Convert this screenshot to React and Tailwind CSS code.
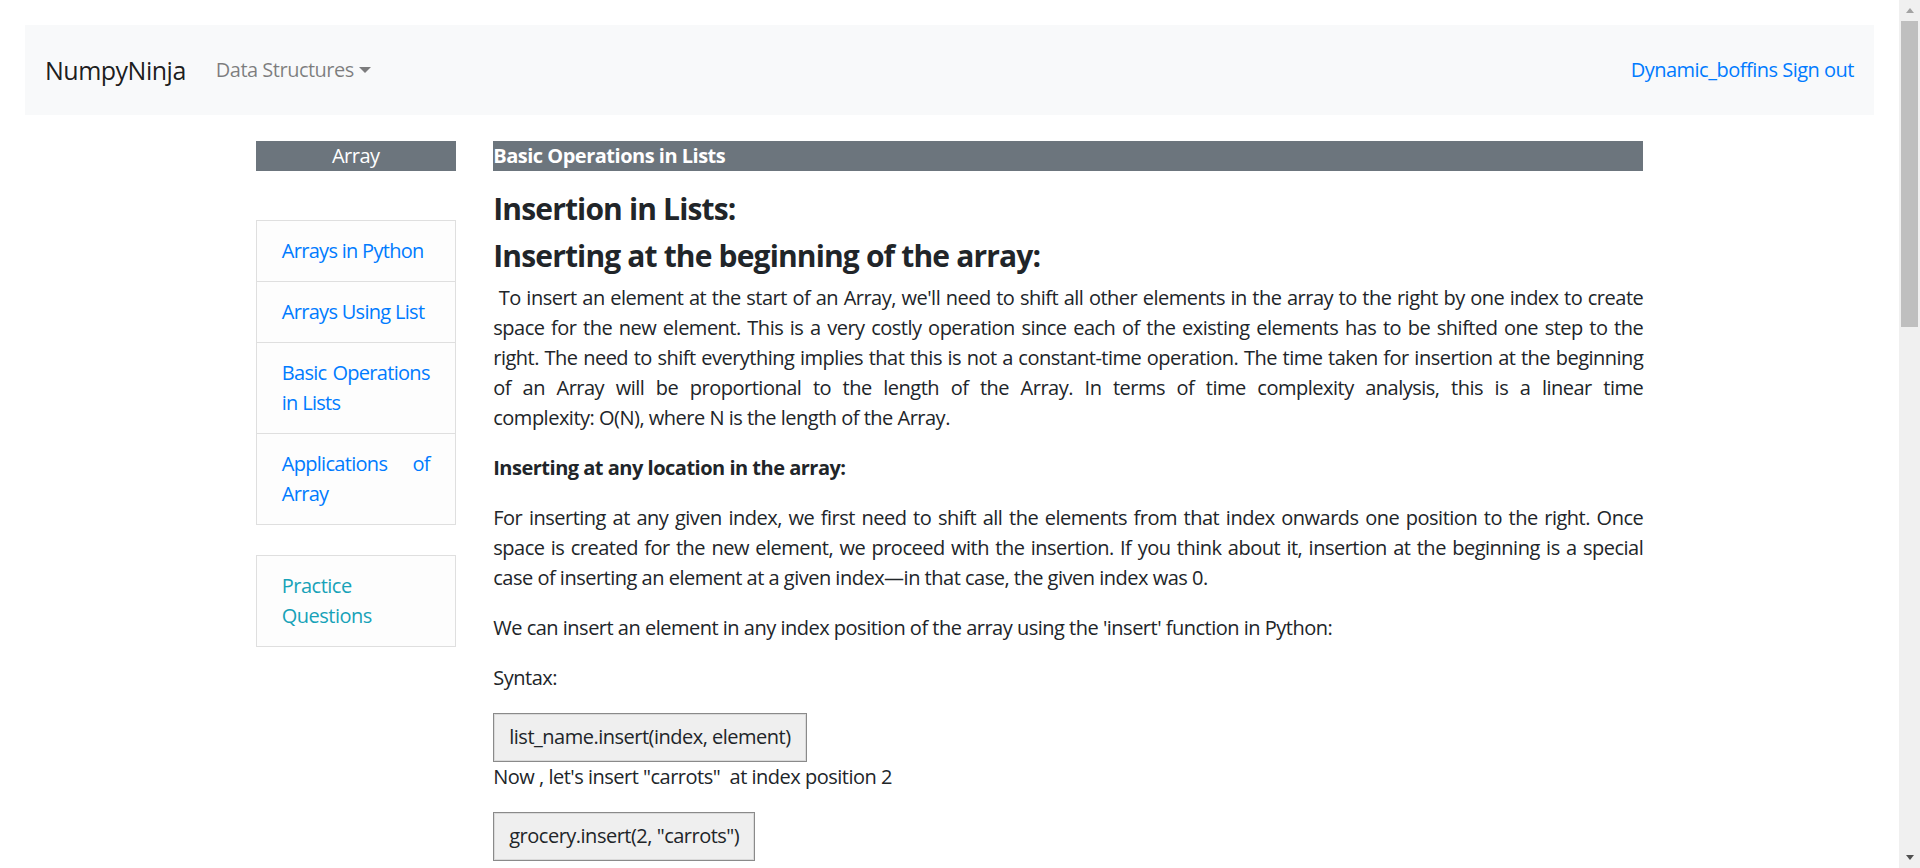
import React from "react";

const sideLinks = [
  "Arrays in Python",
  "Arrays Using List",
  "Basic Operations in Lists",
  "Applications of Array",
];

// lines of the justified paragraphs, kept as in the page
const insertBeginning = [
  "\u00a0To insert an element at the start of an Array, we'll need to shift all other elements in the array to the right by one index to create",
  "space for the new element. This is a very costly operation since each of the existing elements has to be shifted one step to the",
  "right. The need to shift everything implies that this is not a constant-time operation. The time taken for insertion at the beginning",
  "of an Array will be proportional to the length of the Array. In terms of time complexity analysis, this is a linear time",
  "complexity: O(N), where N is the length of the Array.",
];

const insertAnywhere = [
  "For inserting at any given index, we first need to shift all the elements from that index onwards one position to the right. Once",
  "space is created for the new element, we proceed with the insertion. If you think about it, insertion at the beginning is a special",
  "case of inserting an element at a given index\u2014in that case, the given index was 0.",
];

function Justified({ lines }) {
  return (
    <p className="mb-[20px]">
      {lines.map((line, i) => (
        <span
          key={i}
          className={i < lines.length - 1 ? "block text-justify [text-align-last:justify]" : "block"}
        >
          {line}
        </span>
      ))}
    </p>
  );
}

function CodeBox({ children }) {
  return (
    <div className="w-fit border border-[#8a8a8a] bg-[#efefef] px-[15px] py-[8.5px] shadow-[inset_0_0_0_1px_#dadada]">
      {children}
    </div>
  );
}

export default function App() {
  return (
    <div className="flex h-screen overflow-hidden bg-white font-['Open_Sans',sans-serif] text-[20px] leading-[30px] tracking-[-0.5px] text-[#212529]">
      <div className="min-w-0 flex-1 overflow-hidden">
        {/* Navbar */}
        <div className="px-[25px] pt-[25px]">
          <nav className="flex h-[90px] items-center justify-between bg-[#f8f9fa] px-[20px]">
            <div className="flex items-center">
              <a className="mr-[20px] text-[25px] leading-[37px] text-black/90">NumpyNinja</a>
              <a className="flex items-center px-[10px] text-black/50">
                Data Structures
                <span className="ml-[5px] inline-block h-0 w-0 border-x-[6px] border-t-[6px] border-x-transparent border-t-current" />
              </a>
            </div>
            <div className="text-[#007bff]">
              <a>Dynamic_boffins</a> <a>Sign out</a>
            </div>
          </nav>
        </div>

        <div className="mx-auto mt-[26px] flex w-[1425px]">
          {/* Sidebar */}
          <aside className="w-[237.5px] shrink-0 px-[18.75px]">
            <div className="h-[30px] bg-[#6c757d] text-center text-white">Array</div>

            <div className="mt-[49px] border border-[#dfdfdf] bg-[#fdfdfd] tracking-[-0.7px]">
              {sideLinks.map((link, i) => (
                <div
                  key={link}
                  className={
                    i > 0
                      ? "border-t border-[#dfdfdf] px-[25px] py-[15px] text-justify text-[#007bff]"
                      : "px-[25px] py-[15px] text-justify text-[#007bff]"
                  }
                >
                  {link}
                </div>
              ))}
            </div>

            <div className="mt-[30px] border border-[#dfdfdf] bg-[#fdfdfd] px-[25px] py-[15px] text-[#17a2b8]">
              Practice Questions
            </div>
          </aside>

          {/* Main content */}
          <main className="w-[1187.5px] shrink-0 px-[18.75px]">
            <div className="h-[30px] bg-[#6c757d] font-bold text-white">Basic Operations in Lists</div>

            <h3 className="mt-[19.5px] mb-[11px] text-[30px] leading-[36px] font-bold tracking-[-0.85px]">
              Insertion in Lists:
            </h3>
            <h3 className="mb-[9px] text-[30px] leading-[36px] font-bold tracking-[-0.85px]">
              Inserting at the beginning of the array:
            </h3>

            <Justified lines={insertBeginning} />

            <p className="mb-[20px] font-bold">Inserting at any location in the array:</p>

            <Justified lines={insertAnywhere} />

            <p className="mb-[20px]">
              We can insert an element in any index position of the array using the 'insert' function in Python:
            </p>

            <p className="mb-[20px]">Syntax:</p>

            <CodeBox>list_name.insert(index, element)</CodeBox>
            <p className="mb-[20px]">Now , let's insert "carrots"{"\u00a0"} at index position 2</p>
            <CodeBox>grocery.insert(2, "carrots")</CodeBox>
          </main>
        </div>
      </div>

      {/* Window scrollbar */}
      <div className="flex w-[21px] shrink-0 flex-col bg-[#f0f0f0]">
        <div className="flex h-[21px] items-center justify-center">
          <span className="h-0 w-0 border-x-[4.5px] border-b-[5px] border-x-transparent border-b-[#a3a3a3]" />
        </div>
        <div className="mx-[2px] h-[306px] bg-[#bfbfbf]" />
        <div className="flex-1" />
        <div className="flex h-[21px] items-center justify-center">
          <span className="h-0 w-0 border-x-[4.5px] border-t-[5px] border-x-transparent border-t-[#505050]" />
        </div>
      </div>
    </div>
  );
}
